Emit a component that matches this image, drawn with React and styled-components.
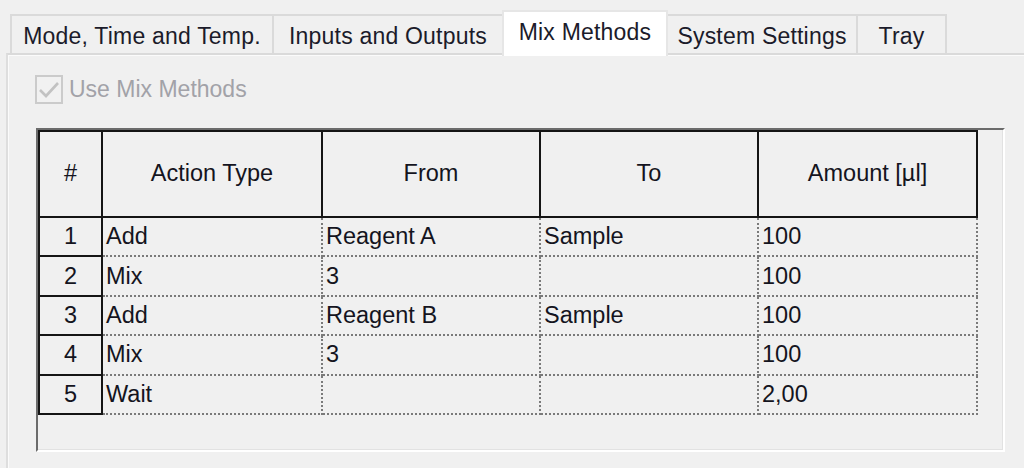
import React from "react";
import styled, { createGlobalStyle } from "styled-components";

const GlobalStyle = createGlobalStyle`
  html, body { margin: 0; padding: 0; background: #f0f0f0; }
  * { box-sizing: border-box; }
`;

const Root = styled.div`
  width: 1024px;
  height: 468px;
  overflow: hidden;
  background: #f0f0f0;
  font-family: "Liberation Sans", Arial, sans-serif;
  color: #151515;
  display: flex;
  flex-direction: column;
`;

const TabStrip = styled.div`
  display: flex;
  align-items: flex-end;
  height: 53px;
  padding-left: 10px;
  position: relative;
  z-index: 1;
`;

const Tab = styled.div`
  flex: none;
  width: ${(p) => p.$w}px;
  height: ${(p) => (p.$active ? 46 : 39)}px;
  margin-bottom: ${(p) => (p.$active ? -3 : 0)}px;
  margin-left: ${(p) => (p.$first ? 0 : -2)}px;
  display: flex;
  align-items: center;
  justify-content: center;
  padding-bottom: ${(p) => (p.$active ? 4 : 0)}px;
  padding-top: ${(p) => (p.$active ? 0 : 3)}px;
  font-size: 23px;
  letter-spacing: 0.2px;
  white-space: nowrap;
  color: #1b1b2a;
  background: ${(p) => (p.$active ? "#ffffff" : "#f0f0f0")};
  border: 2px solid ${(p) => (p.$active ? "#e6e6e6" : "#dadada")};
  border-bottom: none;
  position: relative;
  z-index: ${(p) => (p.$active ? 2 : 1)};
`;

const Panel = styled.div`
  flex: 1;
  margin-left: 6px;
  border-top: 2px solid #dadada;
  border-left: 2px solid #dedede;
  box-shadow: inset 1px 1px 0 #fbfbfb;
  padding: 20px 0 0 27px;
  display: flex;
  flex-direction: column;
  align-items: flex-start;
`;

const CheckRow = styled.label`
  display: flex;
  align-items: center;
  gap: 6px;
  height: 29px;
  font-size: 23px;
  color: #a2a2a8;
`;

const CheckBox = styled.span`
  width: 28px;
  height: 29px;
  border: 2px solid #cbcbcb;
  background: #f1f1f1;
  display: flex;
  align-items: center;
  justify-content: center;
`;

const GridFrame = styled.div`
  margin-top: 24px;
  margin-left: 1px;
  width: 969px;
  height: 324px;
  border-top: 2px solid #6b6b6b;
  border-left: 2px solid #6b6b6b;
  border-right: 2px solid #ffffff;
  border-bottom: 2px solid #ffffff;
  box-shadow: inset -1px -1px 0 #e2e2e2;
  background: #f0f0f0;
`;

const Table = styled.div`
  display: grid;
  grid-template-columns: 65px 220px 218px 218px 219px;
  grid-template-rows: 88px repeat(5, 39.4px);
  font-size: 23.5px;
  color: #141420;
`;

const HeaderCell = styled.div`
  display: flex;
  align-items: center;
  justify-content: center;
  border-top: 2px solid #151515;
  border-right: 2px solid #151515;
  border-bottom: 2px solid #151515;
  border-left: ${(p) => (p.$first ? "2px solid #151515" : "none")};
  white-space: nowrap;
  padding-bottom: 2px;
`;

const RowHeader = styled.div`
  display: flex;
  align-items: center;
  justify-content: center;
  border-left: 2px solid #151515;
  border-right: 2px solid #151515;
  border-bottom: 2px solid #151515;
`;

const DataCell = styled.div`
  display: flex;
  align-items: center;
  padding-left: 3px;
  border-right: 2px dotted #7a7a7a;
  border-bottom: 2px dotted #7a7a7a;
  white-space: nowrap;
`;

const tabs = [
  { label: "Mode, Time and Temp.", w: 264 },
  { label: "Inputs and Outputs", w: 232 },
  { label: "Mix Methods", w: 166, active: true },
  { label: "System Settings", w: 192 },
  { label: "Tray", w: 91 },
];

const headers = ["#", "Action Type", "From", "To", "Amount [\u00b5l]"];

const rows = [
  ["Add", "Reagent A", "Sample", "100"],
  ["Mix", "3", "", "100"],
  ["Add", "Reagent B", "Sample", "100"],
  ["Mix", "3", "", "100"],
  ["Wait", "", "", "2,00"],
];

export default function App() {
  return (
    <Root>
      <GlobalStyle />
      <TabStrip>
        {tabs.map((t, i) => (
          <Tab key={t.label} $w={t.w} $active={t.active} $first={i === 0}>
            {t.label}
          </Tab>
        ))}
      </TabStrip>
      <Panel>
        <CheckRow>
          <CheckBox>
            <svg width="24" height="24" viewBox="0 0 24 24">
              <path d="M3 12 L9 18 L21 5" fill="none" stroke="#c2c2c2" strokeWidth="2.6" />
            </svg>
          </CheckBox>
          Use Mix Methods
        </CheckRow>
        <GridFrame>
          <Table>
            {headers.map((h, i) => (
              <HeaderCell key={h} $first={i === 0}>
                {h}
              </HeaderCell>
            ))}
            {rows.map((r, ri) => (
              <React.Fragment key={ri}>
                <RowHeader>{ri + 1}</RowHeader>
                {r.map((c, ci) => (
                  <DataCell key={ci}>{c}</DataCell>
                ))}
              </React.Fragment>
            ))}
          </Table>
        </GridFrame>
      </Panel>
    </Root>
  );
}
